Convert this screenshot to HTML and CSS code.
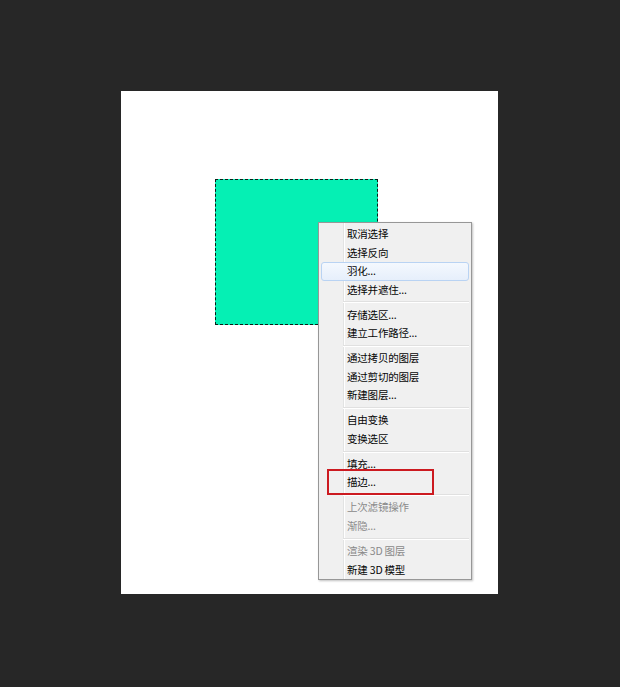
FILE: index.html
```html
<!DOCTYPE html>
<html lang="zh-CN">
<head>
<meta charset="utf-8">
<title>描边</title>
<link rel="stylesheet" href="styles.css">
</head>
<body>
<div class="workspace">
  <div class="canvas">
    <div class="selection"></div>
    <ul class="menu">
      <li class="item">取消选择</li>
      <li class="item">选择反向</li>
      <li class="item hover">羽化...</li>
      <li class="item">选择并遮住...</li>
      <li class="sep"></li>
      <li class="item">存储选区...</li>
      <li class="item">建立工作路径...</li>
      <li class="sep"></li>
      <li class="item">通过拷贝的图层</li>
      <li class="item">通过剪切的图层</li>
      <li class="item">新建图层...</li>
      <li class="sep"></li>
      <li class="item">自由变换</li>
      <li class="item">变换选区</li>
      <li class="sep"></li>
      <li class="item">填充...</li>
      <li class="item">描边...</li>
      <li class="sep"></li>
      <li class="item disabled">上次滤镜操作</li>
      <li class="item disabled">渐隐...</li>
      <li class="sep"></li>
      <li class="item disabled">渲染 3D 图层</li>
      <li class="item">新建 3D 模型</li>
    </ul>
    <div class="mark"></div>
  </div>
</div>
</body>
</html>
```

FILE: styles.css
```css
html, body {
  margin: 0;
  padding: 0;
  background: #272727;
}
.workspace {
  width: 620px;
  height: 687px;
  padding: 91px 0 0 121px;
  box-sizing: border-box;
}
.canvas {
  position: relative;
  width: 377px;
  height: 503px;
  background: #ffffff;
}
.selection {
  position: absolute;
  left: 94px;
  top: 88px;
  width: 163px;
  height: 146px;
  box-sizing: border-box;
  background: #05f0b4;
  border: 1px dashed #0b1e19;
}
.menu {
  position: absolute;
  left: 197px;
  top: 131px;
  width: 154px;
  height: 358px;
  box-sizing: border-box;
  margin: 0;
  padding: 2px 2px 0;
  list-style: none;
  background: #f0f0f0 linear-gradient(to right, transparent 24px, #e2e3e3 24px, #e2e3e3 25px, #ffffff 25px, #ffffff 26px, transparent 26px);
  border: 1px solid #979797;
  box-shadow: 1px 1px 2px rgba(0, 0, 0, 0.25);
  font-family: "Noto Sans CJK SC", "Noto Sans", sans-serif;
  font-size: 10.5px;
  letter-spacing: -0.2px;
  color: #050505;
}
.item {
  height: 18.5px;
  line-height: 18.5px;
  padding-left: 26px;
  box-sizing: border-box;
  white-space: nowrap;
}
.item.hover {
  background: linear-gradient(#f4f8fe, #e6effb);
  border: 1px solid #b9d3f3;
  border-radius: 3px;
  line-height: 16.5px;
  padding-left: 25px;
}
.item.disabled {
  color: #8a8a8a;
}
.sep {
  height: 0;
  margin: 2.3px 0 2.3px 22px;
  border-top: 1px solid #e0e0e0;
  border-bottom: 1px solid #ffffff;
}
.mark {
  position: absolute;
  left: 206px;
  top: 378px;
  width: 107px;
  height: 26px;
  box-sizing: border-box;
  border: 2px solid #cc1a20;
}
```
